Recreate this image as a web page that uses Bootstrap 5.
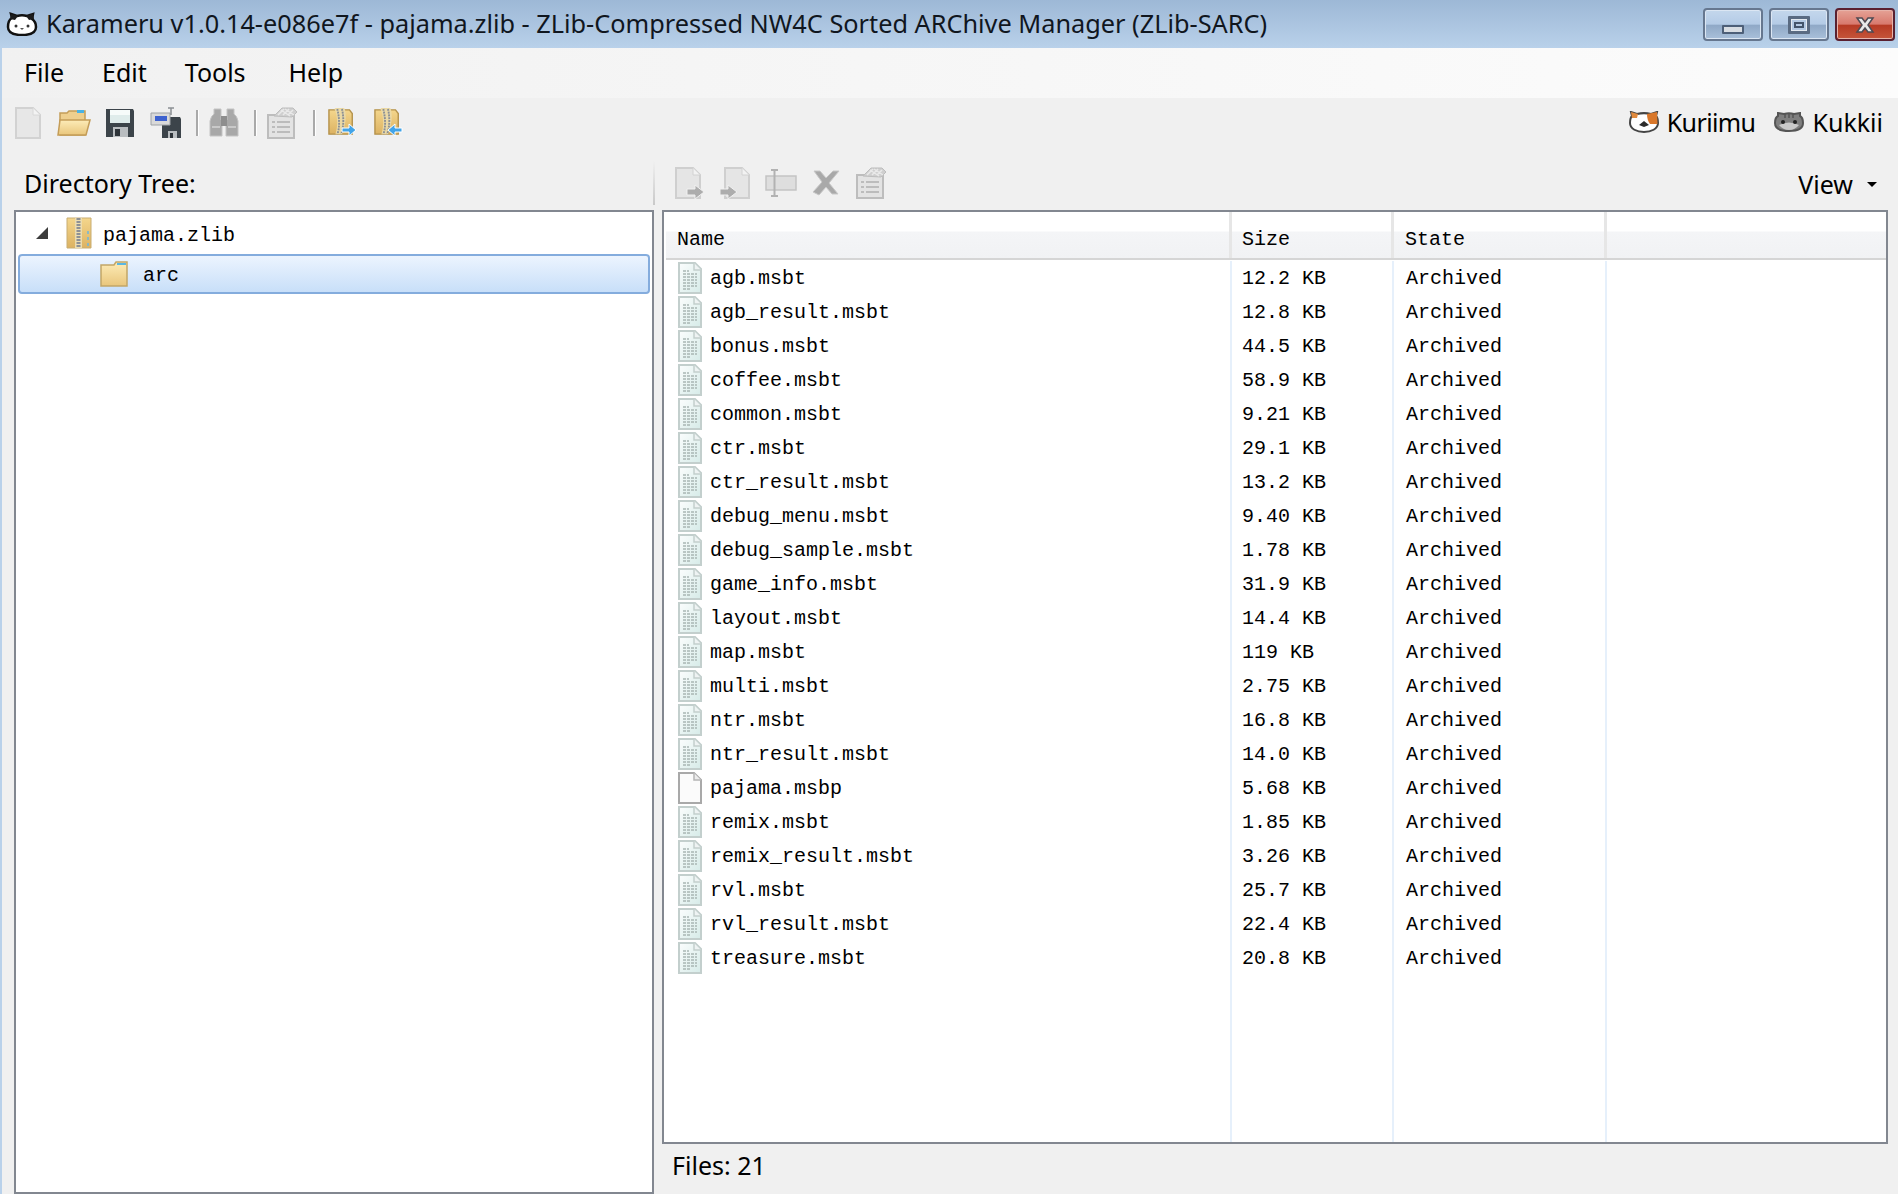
<!DOCTYPE html>
<html lang="en">
<head>
<meta charset="utf-8">
<title>Karameru</title>
<link href="https://cdn.jsdelivr.net/npm/bootstrap@5.3.0/dist/css/bootstrap.min.css" rel="stylesheet">
<style>
html,body{height:100%;overflow:hidden}
body{background:#f0f0f0;color:#000;font-family:"Noto Sans","Open Sans",sans-serif;font-size:25px;line-height:1}
.svg-defs{position:absolute;width:0;height:0;overflow:hidden}
.app-shell{height:1194px}
.flex-none{flex:none}
.title-strip{height:48px;background:linear-gradient(#9db8d6,#b9d1ea);padding-left:6px;padding-right:3px;color:#10161e}
.title-text{font-size:25.3px;margin-left:8px;white-space:nowrap}
.win-set{gap:6px}
.win-btn{width:60px;height:33px;border:2px solid #66778f;border-radius:4px;background:linear-gradient(#c4d7ec 0,#b4cbe6 49%,#8fa8c6 52%,#a9c0da 100%);box-shadow:inset 0 0 0 1px #dbe6f3}
.win-close{border-color:#5a2030;background:linear-gradient(#e5a296 0,#d8796d 49%,#b63a24 52%,#c5553a 100%);box-shadow:inset 0 0 0 1px #e7b3aa}
.win-min{width:22px;height:9px;background:#d8dde3;border:2px solid #4d5f78;margin-top:10px;border-radius:1px}
.win-max{width:22px;height:18px;border:3px solid #5a6b82;background:#b3c9e3;box-shadow:inset 0 0 0 1px #e3e9f0;border-radius:1px}
.win-max::after{content:"";display:block;width:10px;height:6px;margin:3px auto 0;border:2px solid #43546b}
.frame-body{border-left:2px solid #b9d1ea;min-height:0}
.menu-strip{height:50px;background:linear-gradient(90deg,#f1f1f1,#fcfcfc);padding-left:22px;padding-bottom:2px;gap:38px}
.menu-last{margin-left:5px}
.tool-strip{height:52px;padding-left:3px;padding-right:15px;padding-bottom:2px}
.tool-slot{width:46px;height:44px;flex:none}
.tool-sep{width:3px;height:26px;background:#a9a9a9;border-right:1px solid #fff;margin:0 2px 0 7px;flex:none}
.tool-sep-end{margin:0 3px 0 8px}
.side-link{gap:7px}
.side-row{gap:18px;padding-bottom:2px}
.kuri-word{letter-spacing:-.6px}
.tree-pane{width:652px;flex:none}
.pane-head{height:60px;padding-left:22px;padding-top:6px}
.box-line{border:2px solid #828790;background:#fff}
.tree-box{margin-left:12px;flex:1}
.sim-text{font-family:"Liberation Mono","DejaVu Sans Mono",monospace;font-size:20px;line-height:1;font-weight:400;white-space:pre}
.tree-row{height:42px}
.tree-root{padding-left:20px}
.tree-arrow{width:0;height:0;border-left:12px solid transparent;border-bottom:12px solid #3c3c3c;margin-right:18px}
.tree-name{margin-left:11px;padding-top:5px}
.tree-sel{height:40px;margin:0 2px;padding-left:80px;border:2px solid #84acdd;border-radius:4px;background:linear-gradient(#ecf4fe,#c8dff9)}
.tree-label-arc{margin-left:15px;padding-top:3px}
.list-pane{min-width:0;padding-left:8px;padding-right:10px}
.head-tools{height:60px;padding-left:9px;padding-right:0;gap:15px;padding-top:6px}
.head-tools svg{flex:none}
.head-sep{width:2px;height:44px;background:linear-gradient(#f0f0f0,#c9c9c9);margin-right:5px;margin-left:-18px;flex:none}
.view-box{padding-top:2px}
.view-caret{width:0;height:0;border-left:5px solid transparent;border-right:5px solid transparent;border-top:5px solid #000;margin-left:14px;margin-right:11px}
.list-box{flex:1;min-height:0;padding:0 0 0 2px}
.file-grid.table{table-layout:fixed;height:100%;margin:0;--bs-table-bg:transparent;border-collapse:separate;border-spacing:0}
.file-grid.table>:not(caption)>*>*{padding:0;border:0;box-shadow:none;color:#000}
.file-grid th{height:49px;vertical-align:top;font-weight:400;background:linear-gradient(#fff 0,#fff 19px,#f4f5f7 20px,#f1f2f4 46px,#d5d5d5 46px,#d5d5d5 48px,#fff 48px)}
.file-grid .th-in{display:block;height:46px;padding:18px 0 0 11px;border-right:3px solid #e6e6e6}
.file-grid .th-tight{padding-left:10px}
.file-grid .th-end{border-right:0}
.file-grid td{height:34px;vertical-align:middle}
.file-grid td.col-line{border-right:2px solid #e6f0fb}
.file-grid tr.filler td{height:auto}
.file-grid.table>tbody>tr>.name-cell{padding-left:12px}
.file-grid.table>tbody>tr>.size-cell{padding-left:10px;padding-top:2px}
.file-grid.table>tbody>tr>.state-cell{padding-left:12px;padding-top:2px}
.row-in{gap:9px}
.row-name{padding-top:2px;margin-left:-1px}
.doc-ico{flex:none}
.status-strip{height:50px;padding-left:10px;padding-bottom:7px}
.c-name{width:566px}.c-size{width:162px}.c-state{width:213px}
.main-split{min-height:0}
</style>
</head>
<body>
<svg class="svg-defs" width="0" height="0">
<defs>
<linearGradient id="docg" x1="0" y1="0" x2="1" y2="1"><stop offset="0" stop-color="#fbfdfd"/><stop offset="1" stop-color="#d6ebe8"/></linearGradient>
<linearGradient id="fold" x1="0" y1="0" x2="0" y2="1"><stop offset="0" stop-color="#fdecb8"/><stop offset="1" stop-color="#e9c67c"/></linearGradient>
<linearGradient id="zipg" x1="0" y1="0" x2="0" y2="1"><stop offset="0" stop-color="#f4d68c"/><stop offset="1" stop-color="#dcb262"/></linearGradient>
<symbol id="txt" viewBox="0 0 24 32">
<path d="M1 1H17L23 7V31H1Z" fill="url(#docg)" stroke="#c3cfcd" stroke-width="2"/>
<path d="M16 1V8H23" fill="#eef3f3" stroke="#c3cfcd" stroke-width="1.5"/>
<path d="M5 9H11M5 12H19M5 15H19M5 18H19M5 21H19M5 24H19M5 27H12" stroke="#a9b6b4" stroke-width="1.5" stroke-dasharray="3 1"/>
</symbol>
<symbol id="blank" viewBox="0 0 24 32">
<path d="M1 1H16L23 8V31H1Z" fill="#fbfbfb" stroke="#a9a9a9" stroke-width="2"/>
<path d="M16 1V8H23" fill="#ececec" stroke="#b5b5b5" stroke-width="1.5"/>
</symbol>
<symbol id="prop" viewBox="0 0 32 32">
<path d="M2 8H28V31H2Z" fill="#e3e3e3" stroke="#bdbdbd" stroke-width="2"/>
<path d="M8 9L16 1H27L31 5L26 10Z" fill="#cfcfcf" stroke="#bdbdbd"/>
<path d="M12 8L18 2M17 8L23 2M22 8L27 3M15 3L24 9M19 2L28 8" stroke="#e9e9e9" stroke-width="1.5"/>
<path d="M6 15H9M11 15H24M6 20H9M11 20H24M6 25H9M11 25H24" stroke="#b0b0b0" stroke-width="1.5"/>
</symbol>
<symbol id="zipbox" viewBox="0 0 32 30">
<path d="M2 2H24L27 6V28H2Z" fill="url(#zipg)" stroke="#b4924c" stroke-width="1.5"/>
<path d="M8 1C8 -1 19 -1 19 1C21 8 20 18 16 28H9C12 18 11 8 8 1Z" fill="#ebd9a5"/>
<path d="M11 1C13 10 14 20 11 28M16 1C18 10 18 20 15 28" fill="none" stroke="#8a8f95" stroke-width="2" stroke-dasharray="2 1"/>
</symbol>
</defs>
</svg>

<div class="app-shell d-flex flex-column">
  <header class="title-strip d-flex align-items-center flex-none">
    <svg width="32" height="24" viewBox="0 0 32 24">
      <path d="M2 15C2 10 4 7 6 6L5 2L11 4C14 3 18 3 21 4L27 2L26 7C29 9 30 12 30 15C30 21 23 23 16 23C9 23 2 21 2 15Z" fill="#fff" stroke="#111" stroke-width="2.500"/>
      <path d="M5 2L12 4L9 8L4 7ZM27 2L20 4L23 8L28 7Z" fill="#1c1c1c"/>
      <circle cx="10" cy="14" r="1.500" fill="#333"/><circle cx="22" cy="14" r="1.500" fill="#333"/>
      <path d="M14 16H18L16 18Z" fill="#555"/>
    </svg>
    <span class="title-text">Karameru v1.0.14-e086e7f - pajama.zlib - ZLib-Compressed NW4C Sorted ARChive Manager (ZLib-SARC)</span>
    <div class="ms-auto d-flex align-self-start pt-2 win-set">
      <div class="win-btn d-flex justify-content-center align-items-center"><div class="win-min"></div></div>
      <div class="win-btn d-flex justify-content-center align-items-center"><div class="win-max"></div></div>
      <div class="win-btn win-close d-flex justify-content-center align-items-center">
        <svg width="24" height="16" viewBox="0 0 24 16"><path d="M4 1H9L12 5L15 1H20L15 8L20 15H15L12 11L9 15H4L9 8Z" fill="#e8e8ea" stroke="#4f4a52" stroke-width="1.500"/></svg>
      </div>
    </div>
  </header>

  <div class="frame-body d-flex flex-column flex-grow-1">
    <nav class="menu-strip d-flex align-items-center">
      <span>File</span><span>Edit</span><span>Tools</span><span class="menu-last">Help</span>
    </nav>

    <div class="tool-strip d-flex align-items-center">
      <div class="tool-slot d-flex justify-content-center align-items-center">
        <svg width="26" height="32" viewBox="0 0 26 32"><path d="M1 1H18L25 8V31H1Z" fill="#e7e7e7" stroke="#d2d2d2" stroke-width="2"/><path d="M18 1V8H25" fill="#f3f3f3" stroke="#d8d8d8"/></svg>
      </div>
      <div class="tool-slot d-flex justify-content-center align-items-center">
        <svg width="34" height="28" viewBox="0 0 34 28"><path d="M3 26V4H10L12 2H28V26Z" fill="#eecf8e" stroke="#c49d58" stroke-width="1.500"/><path d="M20 1H27V4H20Z" fill="#49b3e6"/><path d="M1 26L3 11H33L29 26Z" fill="url(#fold)" stroke="#c49d58" stroke-width="1.500"/></svg>
      </div>
      <div class="tool-slot d-flex justify-content-center align-items-center">
        <svg width="30" height="30" viewBox="0 0 30 30"><path d="M1 1H28L29 3V29H1Z" fill="#3c444a"/><path d="M5 2H25V15H5Z" fill="#dfeceb"/><path d="M5 2H25V7H5Z" fill="#f6fbfa"/><path d="M8 19H23V29H8Z" fill="#b9bdc0"/><path d="M10 21H15V28H10Z" fill="#2d3338"/></svg>
      </div>
      <div class="tool-slot d-flex justify-content-center align-items-center">
        <svg width="32" height="32" viewBox="0 0 32 32"><path d="M15 10H30L31 12V31H12V14H15Z" fill="#3c444a"/><path d="M18 24H27V31H18Z" fill="#b9bdc0"/><path d="M20 26H23V31H20Z" fill="#2d3338"/><path d="M1 6H20V18H1Z" fill="#d9d9d9" stroke="#9ea2a6" stroke-width="1"/><path d="M5 9H17V14H5Z" fill="#3e62cf"/><path d="M18 1H24M21 1V8" stroke="#8b8f93" stroke-width="1.500"/></svg>
      </div>
      <div class="tool-sep"></div>
      <div class="tool-slot d-flex justify-content-center align-items-center">
        <svg width="30" height="30" viewBox="0 0 30 30"><path d="M5 1H12V12H13V28H1V13Q2 8 5 6ZM25 1H18V12H17V28H29V13Q28 8 25 6Z" fill="#a8a8a8" stroke="#c4c4c4"/><path d="M12 8H18V18H12Z" fill="#8e8e8e"/><path d="M3 19H11M19 19H27" stroke="#c9c9c9" stroke-width="2"/></svg>
      </div>
      <div class="tool-sep"></div>
      <div class="tool-slot d-flex justify-content-center align-items-center">
        <svg width="32" height="32"><use href="#prop"/></svg>
      </div>
      <div class="tool-sep tool-sep-end"></div>
      <div class="tool-slot d-flex justify-content-center align-items-center">
        <svg width="30" height="30" viewBox="0 0 30 30"><use href="#zipbox" width="30" height="28"/><path d="M15 20H22V16L29 22L22 28V24H15Z" fill="#42a4e8" stroke="#fff" stroke-width="1"/></svg>
      </div>
      <div class="tool-slot d-flex justify-content-center align-items-center">
        <svg width="30" height="30" viewBox="0 0 30 30"><use href="#zipbox" width="30" height="28"/><path d="M29 20H22V16L15 22L22 28V24H29Z" fill="#42a4e8" stroke="#fff" stroke-width="1"/></svg>
      </div>
      <div class="ms-auto d-flex align-items-center side-row">
        <div class="d-flex align-items-center side-link">
          <svg width="32" height="22" viewBox="0 0 32 22"><path d="M2 12C2 8 3 6 4 5L3 1L9 3C13 2 19 2 23 3L29 1L28 5C30 7 30 9 30 12C30 18 23 21 16 21C9 21 2 18 2 12Z" fill="#fff" stroke="#444" stroke-width="2"/><path d="M19 3L29 1L29.500 13L22 13Q19 9 19 3Z" fill="#d9772a"/><path d="M3 1L10 3L9 7L4 7Z" fill="#e08a3e"/><path d="M11 14L16 10L21 14L16 16Z" fill="#2c2c2c"/></svg>
          <span class="kuri-word">Kuriimu</span>
        </div>
        <div class="d-flex align-items-center side-link">
          <svg width="32" height="20" viewBox="0 0 32 20"><path d="M2 11C2 7 3 5 5 4L5 1L11 2C14 1 18 1 21 2L27 1L27 4C29 5 30 7 30 11C30 17 23 19 16 19C9 19 2 17 2 11Z" fill="#7f7f7f" stroke="#555" stroke-width="2"/><path d="M12 2V6M16 2V6M20 2V6" stroke="#555" stroke-width="1.500"/><path d="M6 13Q16 8 26 13Q22 18 16 18Q10 18 6 13Z" fill="#c9c9c9"/><circle cx="10" cy="10" r="2" fill="#222"/><circle cx="22" cy="10" r="2" fill="#222"/></svg>
          <span>Kukkii</span>
        </div>
      </div>
    </div>

    <main class="d-flex flex-grow-1 main-split">
      <section class="tree-pane d-flex flex-column">
        <div class="pane-head d-flex align-items-center"><span>Directory Tree:</span></div>
        <div class="tree-box box-line">
          <div class="tree-row tree-root d-flex align-items-center">
            <div class="tree-arrow"></div>
            <svg width="26" height="32" viewBox="0 0 26 32"><path d="M1 1H25V31H1Z" fill="url(#zipg)" stroke="#c8ad72" stroke-width="1"/><path d="M9 1H16V31H9Z" fill="#ecdcae"/><path d="M12.500 1V31" stroke="#8d9095" stroke-width="4" stroke-dasharray="2 1"/><path d="M22 14V30" stroke="#6db6de" stroke-width="1.500" stroke-dasharray="3 3"/></svg>
            <span class="sim-text tree-name">pajama.zlib</span>
          </div>
          <div class="tree-sel d-flex align-items-center">
            <svg width="28" height="26" viewBox="0 0 28 26"><path d="M1 4H14L16 1H27V25H1Z" fill="url(#fold)" stroke="#c2a667" stroke-width="1.500"/><path d="M17 2H26V4H17Z" fill="#58b7e4"/></svg>
            <span class="sim-text tree-label-arc">arc</span>
          </div>
        </div>
      </section>

      <section class="list-pane d-flex flex-column flex-grow-1">
        <div class="head-tools d-flex align-items-center">
          <div class="head-sep"></div>
          <svg width="30" height="32" viewBox="0 0 30 32"><path d="M1 1H18L25 8V31H1Z" fill="#e5e5e5" stroke="#cfcfcf" stroke-width="2"/><path d="M18 1V8H25" fill="#f2f2f2" stroke="#d2d2d2"/><path d="M12 22H20V18L29 25L20 32V28H12Z" fill="#adadad" stroke="#f0f0f0"/></svg>
          <svg width="30" height="32" viewBox="0 0 30 32"><path d="M5 1H22L29 8V31H5Z" fill="#e5e5e5" stroke="#cfcfcf" stroke-width="2"/><path d="M22 1V8H29" fill="#f2f2f2" stroke="#d2d2d2"/><path d="M0 22H8V18L17 25L8 32V28H0Z" fill="#adadad" stroke="#f0f0f0"/></svg>
          <svg width="32" height="28" viewBox="0 0 32 28"><path d="M1 7H31V21H1Z" fill="#dedede" stroke="#c4c4c4" stroke-width="1.500"/><path d="M6 1H13M9.500 1V27M6 27H13" stroke="#b2b2b2" stroke-width="2"/></svg>
          <svg width="28" height="26" viewBox="0 0 28 26"><path d="M2 1H8L14 8L21 1H27L17 13L26 24H20L14 17L7 25L1 22L10 12Z" fill="#a9a9a9" stroke="#c8c8c8"/></svg>
          <svg width="32" height="32"><use href="#prop"/></svg>
          <div class="ms-auto d-flex align-items-center view-box"><span>View</span><span class="view-caret"></span></div>
        </div>
        <div class="list-box box-line">
          <table class="table file-grid">
            <colgroup><col class="c-name"><col class="c-size"><col class="c-state"><col></colgroup>
            <thead><tr>
              <th><span class="th-in sim-text">Name</span></th>
              <th><span class="th-in th-tight sim-text">Size</span></th>
              <th><span class="th-in sim-text">State</span></th>
              <th><span class="th-in th-end"></span></th>
            </tr></thead>
            <tbody>
              <tr><td class="col-line name-cell"><div class="d-flex align-items-center row-in"><svg class="doc-ico" width="24" height="32"><use href="#txt"/></svg><span class="sim-text row-name">agb.msbt</span></div></td><td class="col-line size-cell sim-text">12.2 KB</td><td class="col-line state-cell sim-text">Archived</td><td></td></tr>
              <tr><td class="col-line name-cell"><div class="d-flex align-items-center row-in"><svg class="doc-ico" width="24" height="32"><use href="#txt"/></svg><span class="sim-text row-name">agb_result.msbt</span></div></td><td class="col-line size-cell sim-text">12.8 KB</td><td class="col-line state-cell sim-text">Archived</td><td></td></tr>
              <tr><td class="col-line name-cell"><div class="d-flex align-items-center row-in"><svg class="doc-ico" width="24" height="32"><use href="#txt"/></svg><span class="sim-text row-name">bonus.msbt</span></div></td><td class="col-line size-cell sim-text">44.5 KB</td><td class="col-line state-cell sim-text">Archived</td><td></td></tr>
              <tr><td class="col-line name-cell"><div class="d-flex align-items-center row-in"><svg class="doc-ico" width="24" height="32"><use href="#txt"/></svg><span class="sim-text row-name">coffee.msbt</span></div></td><td class="col-line size-cell sim-text">58.9 KB</td><td class="col-line state-cell sim-text">Archived</td><td></td></tr>
              <tr><td class="col-line name-cell"><div class="d-flex align-items-center row-in"><svg class="doc-ico" width="24" height="32"><use href="#txt"/></svg><span class="sim-text row-name">common.msbt</span></div></td><td class="col-line size-cell sim-text">9.21 KB</td><td class="col-line state-cell sim-text">Archived</td><td></td></tr>
              <tr><td class="col-line name-cell"><div class="d-flex align-items-center row-in"><svg class="doc-ico" width="24" height="32"><use href="#txt"/></svg><span class="sim-text row-name">ctr.msbt</span></div></td><td class="col-line size-cell sim-text">29.1 KB</td><td class="col-line state-cell sim-text">Archived</td><td></td></tr>
              <tr><td class="col-line name-cell"><div class="d-flex align-items-center row-in"><svg class="doc-ico" width="24" height="32"><use href="#txt"/></svg><span class="sim-text row-name">ctr_result.msbt</span></div></td><td class="col-line size-cell sim-text">13.2 KB</td><td class="col-line state-cell sim-text">Archived</td><td></td></tr>
              <tr><td class="col-line name-cell"><div class="d-flex align-items-center row-in"><svg class="doc-ico" width="24" height="32"><use href="#txt"/></svg><span class="sim-text row-name">debug_menu.msbt</span></div></td><td class="col-line size-cell sim-text">9.40 KB</td><td class="col-line state-cell sim-text">Archived</td><td></td></tr>
              <tr><td class="col-line name-cell"><div class="d-flex align-items-center row-in"><svg class="doc-ico" width="24" height="32"><use href="#txt"/></svg><span class="sim-text row-name">debug_sample.msbt</span></div></td><td class="col-line size-cell sim-text">1.78 KB</td><td class="col-line state-cell sim-text">Archived</td><td></td></tr>
              <tr><td class="col-line name-cell"><div class="d-flex align-items-center row-in"><svg class="doc-ico" width="24" height="32"><use href="#txt"/></svg><span class="sim-text row-name">game_info.msbt</span></div></td><td class="col-line size-cell sim-text">31.9 KB</td><td class="col-line state-cell sim-text">Archived</td><td></td></tr>
              <tr><td class="col-line name-cell"><div class="d-flex align-items-center row-in"><svg class="doc-ico" width="24" height="32"><use href="#txt"/></svg><span class="sim-text row-name">layout.msbt</span></div></td><td class="col-line size-cell sim-text">14.4 KB</td><td class="col-line state-cell sim-text">Archived</td><td></td></tr>
              <tr><td class="col-line name-cell"><div class="d-flex align-items-center row-in"><svg class="doc-ico" width="24" height="32"><use href="#txt"/></svg><span class="sim-text row-name">map.msbt</span></div></td><td class="col-line size-cell sim-text">119 KB</td><td class="col-line state-cell sim-text">Archived</td><td></td></tr>
              <tr><td class="col-line name-cell"><div class="d-flex align-items-center row-in"><svg class="doc-ico" width="24" height="32"><use href="#txt"/></svg><span class="sim-text row-name">multi.msbt</span></div></td><td class="col-line size-cell sim-text">2.75 KB</td><td class="col-line state-cell sim-text">Archived</td><td></td></tr>
              <tr><td class="col-line name-cell"><div class="d-flex align-items-center row-in"><svg class="doc-ico" width="24" height="32"><use href="#txt"/></svg><span class="sim-text row-name">ntr.msbt</span></div></td><td class="col-line size-cell sim-text">16.8 KB</td><td class="col-line state-cell sim-text">Archived</td><td></td></tr>
              <tr><td class="col-line name-cell"><div class="d-flex align-items-center row-in"><svg class="doc-ico" width="24" height="32"><use href="#txt"/></svg><span class="sim-text row-name">ntr_result.msbt</span></div></td><td class="col-line size-cell sim-text">14.0 KB</td><td class="col-line state-cell sim-text">Archived</td><td></td></tr>
              <tr><td class="col-line name-cell"><div class="d-flex align-items-center row-in"><svg class="doc-ico" width="24" height="32"><use href="#blank"/></svg><span class="sim-text row-name">pajama.msbp</span></div></td><td class="col-line size-cell sim-text">5.68 KB</td><td class="col-line state-cell sim-text">Archived</td><td></td></tr>
              <tr><td class="col-line name-cell"><div class="d-flex align-items-center row-in"><svg class="doc-ico" width="24" height="32"><use href="#txt"/></svg><span class="sim-text row-name">remix.msbt</span></div></td><td class="col-line size-cell sim-text">1.85 KB</td><td class="col-line state-cell sim-text">Archived</td><td></td></tr>
              <tr><td class="col-line name-cell"><div class="d-flex align-items-center row-in"><svg class="doc-ico" width="24" height="32"><use href="#txt"/></svg><span class="sim-text row-name">remix_result.msbt</span></div></td><td class="col-line size-cell sim-text">3.26 KB</td><td class="col-line state-cell sim-text">Archived</td><td></td></tr>
              <tr><td class="col-line name-cell"><div class="d-flex align-items-center row-in"><svg class="doc-ico" width="24" height="32"><use href="#txt"/></svg><span class="sim-text row-name">rvl.msbt</span></div></td><td class="col-line size-cell sim-text">25.7 KB</td><td class="col-line state-cell sim-text">Archived</td><td></td></tr>
              <tr><td class="col-line name-cell"><div class="d-flex align-items-center row-in"><svg class="doc-ico" width="24" height="32"><use href="#txt"/></svg><span class="sim-text row-name">rvl_result.msbt</span></div></td><td class="col-line size-cell sim-text">22.4 KB</td><td class="col-line state-cell sim-text">Archived</td><td></td></tr>
              <tr><td class="col-line name-cell"><div class="d-flex align-items-center row-in"><svg class="doc-ico" width="24" height="32"><use href="#txt"/></svg><span class="sim-text row-name">treasure.msbt</span></div></td><td class="col-line size-cell sim-text">20.8 KB</td><td class="col-line state-cell sim-text">Archived</td><td></td></tr>
              <tr class="filler"><td class="col-line"></td><td class="col-line"></td><td class="col-line"></td><td></td></tr>
            </tbody>
          </table>
        </div>
        <div class="status-strip d-flex align-items-center"><span>Files: 21</span></div>
      </section>
    </main>
  </div>
</div>
<script src="https://cdn.jsdelivr.net/npm/bootstrap@5.3.0/dist/js/bootstrap.bundle.min.js"></script>
</body>
</html>
